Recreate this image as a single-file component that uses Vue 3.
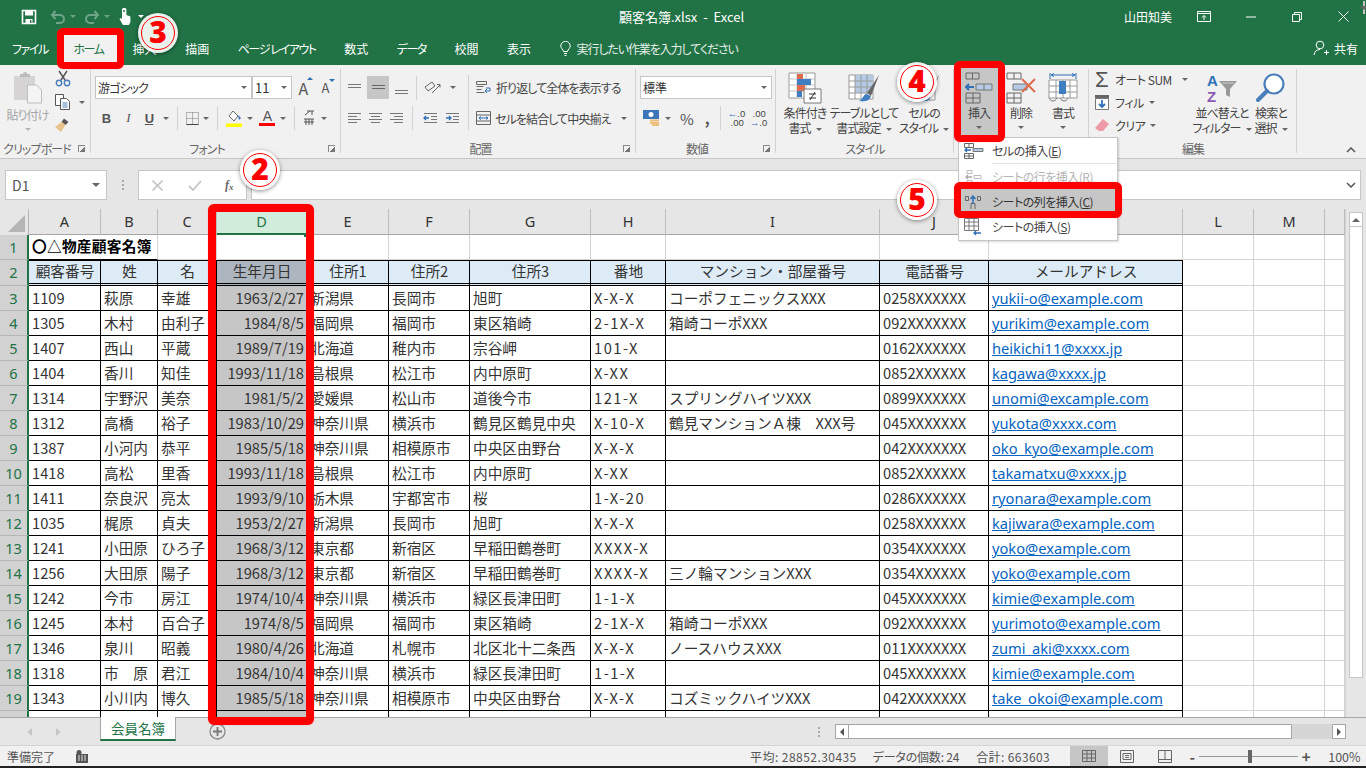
<template>
  <div class="app">
    <!-- title bar -->
    <div class="titlebar">
      <div class="qat">
        <svg class="save" width="16" height="16" viewBox="0 0 16 16"><path d="M1.5 1.5h13v13h-13z" fill="none" stroke="#fff" stroke-width="1.6"/><path d="M4 1.5h8v5H4zM4.500 10h7v4.500h-7z" fill="#fff"/><path d="M9 11h1.400v3H9z" fill="#217346"/></svg>
        <svg class="undo" width="16" height="14" viewBox="0 0 16 14"><path d="M2 5h8a4 4 0 0 1 0 8H6M5.500 1 2 5l3.500 4" fill="none" stroke="#6fa488" stroke-width="2"/></svg>
        <span class="tri dim t1"></span>
        <svg class="redo" width="16" height="14" viewBox="0 0 16 14"><path d="M14 5H6a4 4 0 0 0 0 8h4M10.500 1 14 5l-3.500 4" fill="none" stroke="#6fa488" stroke-width="2"/></svg>
        <span class="tri dim t1"></span>
        <svg class="touch" width="14" height="18" viewBox="0 0 14 18"><path d="M4 2a2.200 2.200 0 0 1 4.400 0v5l4 1.500V14l-1.500 3H5L1.500 11l1-1L4 11z" fill="#fff"/><circle cx="6" cy="3" r="1" fill="#217346"/></svg>
        <span class="tri t2"></span>
      </div>
      <div class="doc">顧客名簿.xlsx &nbsp;-&nbsp; Excel</div>
      <div class="winctl">
        <span class="user">山田知美</span>
        <svg class="wi1" width="14" height="11" viewBox="0 0 14 11"><path d="M.5.500h13v10H.500zM.5 2.500h13M7 9V4.500M5 6.500l2-2 2 2" fill="none" stroke="#fff"/></svg>
        <svg class="wi2" width="10" height="2" viewBox="0 0 10 2"><path d="M0 1h10" stroke="#fff"/></svg>
        <svg class="wi3" width="10" height="10" viewBox="0 0 10 10"><path d="M.5 2.500h7v7h-7zM2.500 2.500v-2h7v7h-2" fill="none" stroke="#fff"/></svg>
        <svg class="wi4" width="11" height="11" viewBox="0 0 11 11"><path d="M.5.500l10 10M10.500.500l-10 10" stroke="#fff"/></svg>
      </div>
    </div>

    <!-- tabs -->
    <div class="tabs">
      <span class="tab kana">ファイル</span>
      <span class="tab kana home">ホーム</span>
      <span class="tab">挿入</span>
      <span class="tab">描画</span>
      <span class="tab kana">ページ レイアウト</span>
      <span class="tab">数式</span>
      <span class="tab kana">データ</span>
      <span class="tab">校閲</span>
      <span class="tab">表示</span>
      <span class="tell">
        <svg width="11" height="15" viewBox="0 0 11 15"><path d="M3.500 10.500C3 8 .8 7.500.8 5a4.700 4.700 0 0 1 9.400 0c0 2.500-2.200 3-2.700 5.500zM4 12.500h3M4.500 14.500h2" fill="none" stroke="#fff"/></svg>
        <span class="tell-t">実行したい作業を入力してください</span>
      </span>
      <span class="share">
        <svg width="16" height="16" viewBox="0 0 16 16"><circle cx="7" cy="5" r="3.800" fill="none" stroke="#fff"/><path d="M1 15c.5-3.500 2.500-5.500 6-5.500M11 12.500h5M13.500 10v5" fill="none" stroke="#fff"/></svg>
        共有
      </span>
    </div>

    <!-- ribbon -->
    <div class="ribbon">
      <section class="group g-clip">
        <div class="body row-body">
          <div class="big paste">
            <svg width="30" height="32" viewBox="0 0 30 32"><path d="M1 4h21v24H1z" fill="#d5d3d3"/><path d="M7 5V2h3a2 2 0 0 1 4 0h3v3z" fill="#bdbbbb"/><path d="M14.500 13h9l5 5v13h-14z" fill="#f4f4f4" stroke="#bdbdbd"/></svg>
            <span class="lbl dis">貼り付け</span>
            <span class="tri lt"></span>
          </div>
          <div class="clip-col">
            <svg width="16" height="17" viewBox="0 0 16 17"><path d="M4 1l6 9M12 1L6 10" stroke="#555" stroke-width="1.500"/><circle cx="4" cy="13" r="2.700" fill="none" stroke="#4a7ebb" stroke-width="1.400"/><circle cx="12" cy="13" r="2.700" fill="none" stroke="#4a7ebb" stroke-width="1.400"/></svg>
            <div class="il">
              <svg width="16" height="16" viewBox="0 0 16 16"><path d="M.5.500h8v11h-8z" fill="#fff" stroke="#555"/><path d="M5.500 4.500h6l3 3v8h-9z" fill="#fff" stroke="#555"/><path d="M7.500 9h5M7.500 11h5M7.500 13h5" stroke="#4a7ebb"/></svg>
              <span class="tri"></span>
            </div>
            <svg width="16" height="16" viewBox="0 0 16 16"><path d="M9 1.500l4.500 3.500-3 3L6.500 5z" fill="#555"/><path d="M6.500 5l4 3L6 15 0 10z" fill="#e8c48a"/></svg>
          </div>
        </div>
        <div class="glabel lb-clip">クリップボード<i class="launch"></i></div>
      </section>

      <section class="group g-font">
        <div class="body">
          <div class="r1">
            <div class="select fontname"><span>游ゴシック</span><i class="tri"></i></div>
            <div class="select fontsize"><span>11</span><i class="tri"></i></div>
            <span class="grow">A<i class="up"></i></span>
            <span class="shrink">A<i class="dn"></i></span>
          </div>
          <div class="r2">
            <b class="fmt">B</b><i class="fmt it">I</i><u class="fmt un">U</u><span class="tri m4"></span>
            <span class="vsep"></span>
            <svg width="13" height="13" viewBox="0 0 13 13"><path d="M.5.500h12v12H.500zM6.500 .5v12M.5 6.500h12" fill="none" stroke="#777" stroke-dasharray="1 1"/><path d="M.5 12.500h12" stroke="#444"/></svg>
            <span class="tri m4"></span>
            <span class="vsep"></span>
            <svg width="16" height="17" viewBox="0 0 16 17"><path d="M7 1l5 5-4 5-5-5z" fill="#fff" stroke="#666"/><path d="M12 5l3 3-2 2z" fill="#2f6fb5"/><path d="M0 13.500h16V17H0z" fill="#ff0"/></svg>
            <span class="tri m5"></span>
            <span class="fcolor">A</span>
            <span class="tri m5"></span>
            <span class="vsep"></span>
            <svg width="12" height="16" viewBox="0 0 12 16"><path d="M4 1h7M9 1v4M2 5l5-4M1 9h10M1 12h10M3 9v6M6 9v6M9 9v6" fill="none" stroke="#555"/></svg>
            <span class="tri m6"></span>
          </div>
        </div>
        <div class="glabel lb-font">フォント<i class="launch"></i></div>
      </section>

      <section class="group g-align">
        <div class="body row-body">
          <div class="al-left">
            <div class="r1 al-r1">
              <svg width="15" height="9" viewBox="0 0 15 9"><path d="M1 1.500h13M1 4.500h13" stroke="#777"/></svg>
              <span class="al-on"><svg width="15" height="9" viewBox="0 0 15 9"><path d="M1 2.500h13M1 5.500h13" stroke="#666"/></svg></span>
              <svg class="al-b" width="15" height="9" viewBox="0 0 15 9"><path d="M1 4.500h13M1 7.500h13" stroke="#777"/></svg>
              <span class="vsep sm"></span>
              <svg width="18" height="14" viewBox="0 0 18 14"><path d="M1 6l7-5 3 4-7 5zM8 12l8-8M13 3.500h3v3" fill="none" stroke="#666"/></svg>
              <span class="tri m3"></span>
            </div>
            <div class="r2 al-r2">
              <svg width="15" height="11" viewBox="0 0 15 11"><path d="M1 .5h13M1 3.500h9M1 6.500h13M1 9.500h9" stroke="#777"/></svg>
              <svg width="15" height="11" viewBox="0 0 15 11"><path d="M1 .5h13M3 3.500h9M1 6.500h13M3 9.500h9" stroke="#777"/></svg>
              <svg width="15" height="11" viewBox="0 0 15 11"><path d="M1 .5h13M5 3.500h9M1 6.500h13M5 9.500h9" stroke="#777"/></svg>
              <span class="vsep sm"></span>
              <svg class="ind1" width="15" height="11" viewBox="0 0 15 11"><path d="M1 .5h13M8 3.500h6M8 6.500h6M1 9.500h13" stroke="#777"/><path d="M6 5H1M3 3L1 5l2 2" fill="none" stroke="#2f6fb5" stroke-width="1.300"/></svg>
              <svg class="ind2" width="15" height="11" viewBox="0 0 15 11"><path d="M1 .5h13M8 3.500h6M8 6.500h6M1 9.500h13" stroke="#777"/><path d="M1 5h5M4 3l2 2-2 2" fill="none" stroke="#2f6fb5" stroke-width="1.300"/></svg>
            </div>
          </div>
          <div class="al-right">
            <div class="wrapbtn">
              <svg width="16" height="14" viewBox="0 0 16 14"><path d="M.5.500h10v3H.500zM.5 5.500h7M.5 8.500h5M.5 11.500h8" fill="none" stroke="#666"/><path d="M10 7h4v3h-5M11 8L9 10l2 2" fill="none" stroke="#2f6fb5"/></svg>
              折り返して全体を表示する
            </div>
            <div class="wrapbtn second">
              <svg width="15" height="14" viewBox="0 0 15 14"><path d="M.5.500h14v13H.500zM.5 4h14M.5 10h14" fill="none" stroke="#666"/><path d="M3 7h9M5 5.500L3 7l2 1.500M10 5.500L12 7l-2 1.500" fill="none" stroke="#2f6fb5"/></svg>
              セルを結合して中央揃え
              <span class="tri m6"></span>
            </div>
          </div>
        </div>
        <div class="glabel lb-align">配置<i class="launch"></i></div>
      </section>

      <section class="group g-num">
        <div class="body">
          <div class="r1"><div class="select numfmt"><span>標準</span><i class="tri"></i></div></div>
          <div class="r2 num-r2">
            <svg width="17" height="16" viewBox="0 0 17 16"><path d="M0 0h16v9H0z" fill="#3a76b8"/><circle cx="8" cy="4.500" r="2.500" fill="#fff"/><path d="M7 9.500h9v2H7zM7 12h9v2H7zM9 14h7v2H9z" fill="#ecc07c"/></svg>
            <span class="tri m5"></span>
            <span class="pct">%</span>
            <span class="comma">,</span>
            <span class="vsep"></span>
            <span class="dec"><i><em>←</em>.0</i><i>.00</i></span>
            <span class="dec"><i>.00</i><i><em>→</em>.0</i></span>
          </div>
        </div>
        <div class="glabel lb-font">数値<i class="launch"></i></div>
      </section>

      <section class="group g-style">
        <div class="body row-body">
          <div class="big w58">
            <svg width="34" height="32" viewBox="0 0 34 32"><path d="M1 1h26v25H1z" fill="#fff" stroke="#999"/><path d="M9 1v25M18 1v25M1 7h26M1 13h26M1 19h26" stroke="#c4c4c4"/><path d="M9 2h6v5H9z" fill="#dd6b4d"/><path d="M9 7h14v6H9z" fill="#3f7fc1"/><path d="M9 13h8v6H9z" fill="#dd6b4d"/><path d="M9 19h5v6H9z" fill="#3f7fc1"/><path d="M16 17h17v14H16z" fill="#fff" stroke="#777"/><path d="M21 22h7M21 26h7M27 20l-5 8" stroke="#333"/></svg>
            <span class="lbl">条件付き</span>
            <span class="lbl">書式<i class="tri in"></i></span>
          </div>
          <div class="big w60">
            <svg width="32" height="32" viewBox="0 0 32 32"><path d="M1 3h24v24H1z" fill="#fff" stroke="#999"/><path d="M7 3h18v18H7z" fill="#b5cbe5"/><path d="M1 9h24M1 15h24M1 21h24M7 3v24M13 3v24M19 3v24" stroke="#9a9a9a"/><path d="M31 3L19 21l4 3z" fill="#666"/><path d="M18 22c-3 1-3 5-7 7 5 1 11 0 12-5z" fill="#3f7fc1"/></svg>
            <span class="lbl">テーブルとして</span>
            <span class="lbl">書式設定<i class="tri in"></i></span>
          </div>
          <div class="big w60">
            <svg width="32" height="32" viewBox="0 0 32 32"><path d="M3 8h24v20H3z" fill="#fff" stroke="#999"/><path d="M31 3L19 21l4 3z" fill="#666"/><path d="M18 22c-3 1-3 5-7 7 5 1 11 0 12-5z" fill="#3f7fc1"/></svg>
            <span class="lbl">セルの</span>
            <span class="lbl">スタイル<i class="tri in"></i></span>
          </div>
        </div>
        <div class="glabel">スタイル</div>
      </section>

      <section class="group g-cell">
        <div class="body row-body">
          <div class="big cellbtn active">
            <svg width="28" height="32" viewBox="0 0 28 32"><path d="M1 1h13v6H1zM7.500 1v6M1 21h14v10H1zM8 21v10M1 26h14" fill="none" stroke="#666"/><path d="M11 12h16v6H11z" fill="#b5cbe5" stroke="#777"/><path d="M19 12v6" stroke="#777"/><path d="M9 15H1M4 12l-3 3 3 3" fill="none" stroke="#2f6fb5" stroke-width="2"/></svg>
            <span class="lbl">挿入</span>
            <span class="tri lt2"></span>
          </div>
          <div class="big cellbtn">
            <svg width="30" height="32" viewBox="0 0 30 32"><path d="M1 1h14v6H1zM8 1v6M1 21h14v10H1zM8 21v10M1 26h14" fill="none" stroke="#666"/><path d="M7 12h14v6H7z" fill="#b5cbe5" stroke="#777"/><path d="M16 7l13 13M29 7L16 20" stroke="#dd6b4d" stroke-width="2"/></svg>
            <span class="lbl">削除</span>
            <span class="tri lt2"></span>
          </div>
          <div class="big cellbtn">
            <svg width="30" height="32" viewBox="0 0 30 32"><path d="M2 1v6M28 1v6M3 3h24M6 1.500L3 3l3 1.500M24 1.500L27 3l-3 1.500" fill="none" stroke="#2f6fb5"/><path d="M1 8h28v18H1zM1 14h28M1 20h28M8 8v18M15 8v18M22 8v18" fill="#fff" stroke="#999"/><path d="M11 9h7v13h-7z" fill="#3f7fc1"/><path d="M1 26c2 4 6 4 8 0M12 26c2 4 6 4 8 0" fill="none" stroke="#777"/></svg>
            <span class="lbl">書式</span>
            <span class="tri lt2"></span>
          </div>
        </div>
        <div class="glabel"></div>
      </section>

      <section class="group g-edit">
        <div class="body row-body">
          <div class="edit-col">
            <div class="edit-row"><span class="sigma">Σ</span><span>オート SUM</span><i class="tri m12"></i></div>
            <div class="edit-row">
              <svg width="14" height="15" viewBox="0 0 14 15"><path d="M0 0h14v3H0z" fill="#666"/><path d="M.5 3.500h13v11H.500z" fill="#fff" stroke="#777"/><path d="M7 5v7M4 9l3 3 3-3" fill="none" stroke="#2f6fb5" stroke-width="1.800"/></svg>
              <span class="fl">フィル</span><i class="tri m5"></i>
            </div>
            <div class="edit-row">
              <svg width="14" height="13" viewBox="0 0 14 13"><path d="M8 0l6 5-6 7H4L0 9z" fill="#ef9aa8"/></svg>
              <span class="fl">クリア</span><i class="tri m5"></i>
            </div>
          </div>
          <div class="big w54">
            <svg width="32" height="32" viewBox="0 0 32 32"><text x="1" y="14" class="az a">A</text><text x="1" y="30" class="az z">Z</text><path d="M13 9h18l-7 8v8l-4-2v-6z" fill="#999"/><path d="M16 11h12" stroke="#ccc"/></svg>
            <span class="lbl">並べ替えと</span>
            <span class="lbl">フィルター<i class="tri in"></i></span>
          </div>
          <div class="big w44">
            <svg width="30" height="32" viewBox="0 0 30 32"><circle cx="18" cy="12" r="9.500" fill="#fff" stroke="#4a7ebb" stroke-width="2.200"/><path d="M11 19L2 28" stroke="#4a7ebb" stroke-width="4" stroke-linecap="round"/></svg>
            <span class="lbl">検索と</span>
            <span class="lbl">選択<i class="tri in"></i></span>
          </div>
        </div>
        <div class="glabel">編集</div>
      </section>

      <div class="collapse">
        <svg width="10" height="6" viewBox="0 0 10 6"><path d="M1 5l4-4 4 4" fill="none" stroke="#555" stroke-width="1.500"/></svg>
      </div>
    </div>

    <!-- formula bar -->
    <div class="fbar">
      <div class="namebox"><span>D1</span><i class="tri big-tri"></i></div>
      <span class="fdots"></span>
      <div class="fbtns">
        <svg width="11" height="11" viewBox="0 0 11 11"><path d="M.5.500l10 10M10.500.500l-10 10" stroke="#c6c6c6" stroke-width="1.600"/></svg>
        <svg width="14" height="11" viewBox="0 0 14 11"><path d="M1 6l4 4 8-9" fill="none" stroke="#c6c6c6" stroke-width="1.800"/></svg>
        <span class="fx">f<sub>x</sub></span>
      </div>
      <div class="finput">
        <svg width="10" height="6" viewBox="0 0 10 6"><path d="M1 1l4 4 4-4" fill="none" stroke="#555" stroke-width="1.500"/></svg>
      </div>
    </div>

    <!-- sheet grid -->
    <div class="sheet">
      <div class="grid">
        <div class="gridrow colhead">
          <div class="corner"><i></i></div>
          <div v-for="c in letters" :key="c" class="ch" :class="{ sel: c === 'D' }">{{ c }}</div>
          <div class="ch"></div>
        </div>

        <div class="gridrow r25">
          <div class="rh">1</div>
          <div class="cell plain title2">〇△物産顧客名簿</div>
          <div class="cell plain"></div>
          <div class="cell plain d1"><i class="handle"></i></div>
          <div v-for="n in 10" :key="n" class="cell plain"></div>
        </div>

        <div class="gridrow r26">
          <div class="rh">2</div>
          <div v-for="(h, i) in heads" :key="h" class="cell hd" :class="{ hdsel: i === 3 }">{{ h }}</div>
          <div class="cell plain"></div><div class="cell plain"></div><div class="cell plain"></div>
        </div>

        <div v-for="(row, r) in rows" :key="r" class="gridrow r25">
          <div class="rh">{{ r + 3 }}</div>
          <div v-for="(v, i) in row" :key="i" class="cell data" :class="{ dt: i === 3, wide: i === 7 }">
            <a v-if="i === 10" class="link">{{ v }}</a>
            <template v-else>{{ v }}</template>
          </div>
          <div class="cell plain"></div><div class="cell plain"></div><div class="cell plain"></div>
        </div>

        <div class="gridrow r25">
          <div class="rh"></div>
          <div v-for="i in 11" :key="i" class="cell data" :class="{ dt: i === 4 }"><template v-if="i === 4">1985/5/18</template></div>
          <div class="cell plain"></div><div class="cell plain"></div><div class="cell plain"></div>
        </div>
      </div>

      <div class="vscroll">
        <div class="sbtn"><i class="tup"></i></div>
        <div class="vthumb"></div>
        <div class="sbtn dn"><i class="tdn"></i></div>
      </div>
    </div>

    <!-- sheet tabs -->
    <div class="sheettabs">
      <span class="nav nl"></span>
      <span class="nav nr"></span>
      <div class="stab">会員名簿</div>
      <svg class="addsheet" width="17" height="17" viewBox="0 0 17 17"><circle cx="8.500" cy="8.500" r="7.500" fill="none" stroke="#8a8a8a" stroke-width="1.300"/><path d="M8.500 4v9M4 8.500h9" stroke="#777" stroke-width="1.800"/></svg>
      <span class="hdots"></span>
      <div class="hscroll">
        <div class="hbtn"><i class="tl"></i></div>
        <div class="hthumb"></div>
        <div class="hbtn end"><i class="tr"></i></div>
      </div>
    </div>

    <!-- status bar -->
    <div class="status">
      <span class="ready">準備完了</span>
      <svg width="12" height="13" viewBox="0 0 12 13"><circle cx="3" cy="2.500" r="2.500" fill="#555"/><path d="M0 4h12v9H0z" fill="#555"/><path d="M2 6h2M5 6h2M8 6h2M2 8h2M5 8h2M8 8h2M2 10h2M5 10h2M8 10h2" stroke="#e6e6e6"/></svg>
      <span class="stats s1">平均: 28852.30435</span>
      <span class="stats s2">データの個数: 24</span>
      <span class="stats s3">合計: 663603</span>
      <span class="view on"><svg width="14" height="12" viewBox="0 0 14 12"><path d="M.5.500h13v11H.500zM.5 4h13M.5 8h13M5 .5v11M9.500 .5v11" fill="none" stroke="#666"/></svg></span>
      <span class="view"><svg width="14" height="13" viewBox="0 0 14 13"><path d="M.5.500h13v12H.500zM3 3.500h8v6H3zM5 5.500h4M5 7.500h4" fill="none" stroke="#666"/></svg></span>
      <span class="view"><svg width="14" height="13" viewBox="0 0 14 13"><path d="M.5.500h13v12H.500zM.5 9.500h13M7 .5v9" fill="none" stroke="#666"/></svg></span>
      <span class="zm">-</span>
      <span class="slider"><i></i></span>
      <span class="zm">+</span>
      <span class="pc">100%</span>
    </div>
    <div class="strip"></div>

    <!-- dropdown menu opened from 挿入 -->
    <div class="menu">
      <div class="mi first-mi">
        <svg width="20" height="16" viewBox="0 0 20 16"><path d="M.5.500h9v4h-9zM5 .5v4M.5 10.500h9v5h-9zM5 10.500v5M.5 13h9" fill="none" stroke="#666"/><path d="M9 5.500h10v3H9z" fill="#b5cbe5" stroke="#777"/><path d="M7 7H1M3 5L1 7l2 2" fill="none" stroke="#2f6fb5" stroke-width="1.300"/></svg>
        <span>セルの挿入(<u>E</u>)</span>
      </div>
      <div class="msep"></div>
      <div class="mi off">
        <svg width="20" height="14" viewBox="0 0 20 14"><path d="M3 .5h5v3H3zM3 10.500h5v3H3zM10 5.500h7v3h-7z" fill="none" stroke="#bbb"/><path d="M8 7H2M4 5L2 7l2 2" fill="none" stroke="#aaa" stroke-width="1.300"/></svg>
        <span>シートの行を挿入(R)</span>
      </div>
      <div class="mi hot">
        <svg width="20" height="14" viewBox="0 0 20 14"><path d="M1.500 1.500h3v4h-3zM13.500 1.500h3v4h-3zM7 8.500h4V14M7 8.500V14" fill="none" stroke="#666"/><path d="M9 9V1M6.500 4L9 1l2.500 3" fill="none" stroke="#2f6fb5" stroke-width="1.500"/></svg>
        <span>シートの列を挿入(<u>C</u>)</span>
      </div>
      <div class="mi">
        <svg width="20" height="18" viewBox="0 0 20 18"><path d="M.5.500h14v12H.500zM.5 4h14M.5 8h14M5 .5v12M10 .5v12" fill="none" stroke="#777"/><path d="M17 15h-7M12 13l-2 2 2 2" fill="none" stroke="#2f6fb5" stroke-width="1.300"/></svg>
        <span>シートの挿入(<u>S</u>)</span>
      </div>
    </div>

    <!-- red annotations -->
    <div class="mark m-home"></div>
    <div class="mark m-col"></div>
    <div class="mark m-ins"></div>
    <div class="mark m-item"></div>
    <div class="badge b3">3</div>
    <div class="badge b2">2</div>
    <div class="badge b4">4</div>
    <div class="badge b5">5</div>
  </div>
</template>

<script setup>
const letters = ['A', 'B', 'C', 'D', 'E', 'F', 'G', 'H', 'I', 'J', 'K', 'L', 'M']
const heads = ['顧客番号', '姓', '名', '生年月日', '住所1', '住所2', '住所3', '番地', 'マンション・部屋番号', '電話番号', 'メールアドレス']

const rows = [
  ['1109', '萩原', '幸雄', '1963/2/27', '新潟県', '長岡市', '旭町', 'X-X-X', 'コーポフェニックスXXX', '0258XXXXXX', 'yukii-o@example.com'],
  ['1305', '木村', '由利子', '1984/8/5', '福岡県', '福岡市', '東区箱崎', '2-1X-X', '箱崎コーポXXX', '092XXXXXXX', 'yurikim@example.com'],
  ['1407', '西山', '平蔵', '1989/7/19', '北海道', '稚内市', '宗谷岬', '101-X', '', '0162XXXXXX', 'heikichi11@xxxx.jp'],
  ['1404', '香川', '知佳', '1993/11/18', '島根県', '松江市', '内中原町', 'X-XX', '', '0852XXXXXX', 'kagawa@xxxx.jp'],
  ['1314', '宇野沢', '美奈', '1981/5/2', '愛媛県', '松山市', '道後今市', '121-X', 'スプリングハイツXXX', '0899XXXXXX', 'unomi@excample.com'],
  ['1312', '高橋', '裕子', '1983/10/29', '神奈川県', '横浜市', '鶴見区鶴見中央', 'X-10-X', '鶴見マンションＡ棟　XXX号', '045XXXXXXX', 'yukota@xxxx.com'],
  ['1387', '小河内', '恭平', '1985/5/18', '神奈川県', '相模原市', '中央区由野台', 'X-X-X', '', '042XXXXXXX', 'oko_kyo@example.com'],
  ['1418', '高松', '里香', '1993/11/18', '島根県', '松江市', '内中原町', 'X-XX', '', '0852XXXXXX', 'takamatxu@xxxx.jp'],
  ['1411', '奈良沢', '亮太', '1993/9/10', '栃木県', '宇都宮市', '桜', '1-X-20', '', '0286XXXXXX', 'ryonara@example.com'],
  ['1035', '梶原', '貞夫', '1953/2/27', '新潟県', '長岡市', '旭町', 'X-X-X', '', '0258XXXXXX', 'kajiwara@example.com'],
  ['1241', '小田原', 'ひろ子', '1968/3/12', '東京都', '新宿区', '早稲田鶴巻町', 'XXXX-X', '', '0354XXXXXX', 'yoko@example.com'],
  ['1256', '大田原', '陽子', '1968/3/12', '東京都', '新宿区', '早稲田鶴巻町', 'XXXX-X', '三ノ輪マンションXXX', '0354XXXXXX', 'yoko@example.com'],
  ['1242', '今市', '房江', '1974/10/4', '神奈川県', '横浜市', '緑区長津田町', '1-1-X', '', '045XXXXXXX', 'kimie@example.com'],
  ['1245', '本村', '百合子', '1974/8/5', '福岡県', '福岡市', '東区箱崎', '2-1X-X', '箱崎コーポXXX', '092XXXXXXX', 'yurimoto@example.com'],
  ['1346', '泉川', '昭義', '1980/4/26', '北海道', '札幌市', '北区北十二条西', 'X-X-X', 'ノースハウスXXX', '011XXXXXXX', 'zumi_aki@xxxx.com'],
  ['1318', '市　原', '君江', '1984/10/4', '神奈川県', '横浜市', '緑区長津田町', '1-1-X', '', '045XXXXXXX', 'kimie@example.com'],
  ['1343', '小川内', '博久', '1985/5/18', '神奈川県', '相模原市', '中央区由野台', 'X-X-X', 'コズミックハイツXXX', '042XXXXXXX', 'take_okoi@example.com']
]
</script>

<style>
html, body { margin: 0; background: #e6e6e6; }
</style>

<style scoped>
.app {
  position: relative;
  width: 1366px;
  height: 768px;
  overflow: hidden;
  display: flex;
  flex-direction: column;
  background: #e6e6e6;
  color: #444;
  font-family: "Noto Sans CJK JP", "Noto Sans", sans-serif;
  font-size: 12px;
}
svg { display: block; flex: none; }

/* little dropdown triangle */
.tri {
  display: inline-block;
  width: 0;
  height: 0;
  flex: none;
  border-left: 3.5px solid transparent;
  border-right: 3.5px solid transparent;
  border-top: 3.5px solid #666;
}
.tri.dim { border-top-color: #6fa488; }
.tri.m3 { margin-left: 3px; }
.tri.m4 { margin-left: 4px; }
.tri.m5 { margin-left: 5px; }
.tri.m6 { margin-left: 6px; }
.tri.m12 { margin-left: 10px; }
.tri.in { margin-left: 5px; vertical-align: middle; }

/* title bar */
.titlebar {
  height: 33px;
  flex: none;
  background: #217346;
  color: #fff;
  display: flex;
  align-items: center;
  position: relative;
}
.qat { display: flex; align-items: center; padding-left: 21px; }
.qat .tri { border-top-color: #fff; }
.qat .tri.dim { border-top-color: #6fa488; }
.undo { margin-left: 13px; }
.t1 { margin-left: 4px; }
.redo { margin-left: 8px; }
.touch { margin-left: 8px; }
.t2 { margin-left: 6px; }
.doc {
  position: absolute;
  left: 619px;
  font-size: 13px;
  white-space: nowrap;
}
.winctl { margin-left: auto; display: flex; align-items: center; padding-right: 17px; }
.user { font-size: 12px; margin-right: 25px; }
.wi2 { margin-left: 35px; }
.wi3 { margin-left: 36px; }
.wi4 { margin-left: 36px; }

/* tab strip */
.tabs {
  height: 32px;
  flex: none;
  background: #217346;
  color: #fff;
  display: flex;
  align-items: center;
  font-feature-settings: "palt";
  white-space: nowrap;
  padding-left: 12px;
  padding-bottom: 2px;
  box-sizing: border-box;
}
.tab { margin-right: 28.500px; }
.tab.kana { letter-spacing: -1.400px; }
.tab.home {
  background: #f1f1f1;
  color: #217346;
  margin-left: -13px;
  margin-right: 16px;
  padding: 5px 13px 0 10px;
  height: 30px;
  box-sizing: border-box;
  align-self: flex-end;
  margin-bottom: -2px;
}
.tell { display: flex; align-items: center; gap: 6px; color: #e4efe9; }
.tell-t { letter-spacing: -1.100px; }
.share { margin-left: auto; display: flex; align-items: center; gap: 5px; padding-right: 8px; }

/* ribbon */
.ribbon {
  height: 94px;
  flex: none;
  box-sizing: border-box;
  background: #f1f1f1;
  border-bottom: 1px solid #c6c6c6;
  display: flex;
  font-feature-settings: "palt";
  letter-spacing: -.9px;
}
.group {
  box-sizing: border-box;
  display: flex;
  flex-direction: column;
  position: relative;
}
.group::after {
  content: "";
  position: absolute;
  right: 0;
  top: 4px;
  bottom: 5px;
  width: 1px;
  background: #d2d2d2;
}
.body { height: 75px; flex: none; box-sizing: border-box; padding-top: 11px; }
.row-body { display: flex; padding-top: 0; }
.glabel {
  height: 18px;
  line-height: 18px;
  text-align: center;
  color: #666;
  position: relative;
}
.lb-clip { padding-right: 17px; }
.lb-font { padding-right: 22px; }
.lb-align { padding-right: 16px; }
.launch {
  position: absolute;
  right: 6px;
  top: 5px;
  width: 7px;
  height: 7px;
  box-sizing: border-box;
  border-left: 1px solid #888;
  border-top: 1px solid #888;
  background: linear-gradient(135deg, transparent 55%, #777 55%);
}
.g-clip { width: 91px; }
.g-font { width: 250px; padding-left: 4px; }
.g-align { width: 295px; }
.g-num { width: 140px; padding-left: 4px; }
.g-style { width: 178px; }
.g-cell { width: 135px; }
.g-edit { width: 208px; }
.collapse { flex: 1; display: flex; align-items: flex-end; justify-content: flex-end; padding: 0 10px 5px 0; }

.big {
  display: flex;
  flex-direction: column;
  align-items: center;
  padding-top: 7px;
  box-sizing: border-box;
  height: 75px;
  white-space: nowrap;
}
.big svg { height: 32px; margin-bottom: 1px; }
.lbl { line-height: 15px; height: 15px; }
.lbl.dis { color: #a6a6a6; margin-top: 2px; }
.paste { width: 55px; }
.tri.lt { border-top-color: #b5b5b5; margin-top: 6px; }
.tri.lt2 { margin-top: 6px; }
.clip-col { display: flex; flex-direction: column; gap: 7px; padding-top: 5px; }
.il { display: flex; align-items: center; gap: 8px; }
.w58 { width: 58px; }
.w60 { width: 60px; }
.w54 { width: 54px; }
.w44 { width: 44px; }
.cellbtn { width: 42px; }
.g-cell .row-body { padding-left: 4px; }
.cellbtn.active {
  width: 37px;
  margin: 3px 2.500px 0;
  height: 68px;
  padding-top: 4px;
  background: #c6c6c6;
}

.r1 { display: flex; align-items: center; height: 23px; }
.r2 { display: flex; align-items: center; height: 24px; margin-top: 7px; }
.select {
  box-sizing: border-box;
  height: 23px;
  background: #fff;
  border: 1px solid #c6c6c6;
  display: flex;
  align-items: center;
  justify-content: space-between;
  padding: 0 4px 0 2px;
  color: #333;
}
.fontname { width: 157px; }
.fontsize { width: 40px; font-size: 13px; letter-spacing: 0; }
.numfmt { width: 132px; letter-spacing: 0; }
.grow, .shrink { position: relative; font-size: 15px; width: 22px; text-align: center; color: #555; }
.grow { font-size: 16px; }
.shrink { font-size: 13px; }
.up, .dn { position: absolute; right: 1px; top: 1px; width: 0; height: 0; border-left: 3px solid transparent; border-right: 3px solid transparent; }
.up { border-bottom: 3px solid #2f6fb5; }
.dn { border-top: 3px solid #2f6fb5; }
.fmt { font-family: "Liberation Sans", sans-serif; font-size: 13px; color: #555; width: 22px; text-align: center; }
.it { font-family: "Liberation Serif", serif; }
.un { width: 20px; font-weight: 700; }
.vsep { width: 1px; height: 24px; background: #d2d2d2; margin: 0 8px; flex: none; }
.vsep.sm { margin: 0 7px; }
.fcolor {
  font-size: 14px;
  font-family: "Liberation Sans", sans-serif;
  color: #555;
  margin-left: 6px;
  line-height: 13px;
  border-bottom: 3px solid #f00;
  width: 16px;
  text-align: center;
}
.al-left { width: 128px; box-sizing: border-box; padding: 11px 0 0 6px; position: relative; }
.al-left::after { content: ""; position: absolute; right: 0; top: 10px; height: 55px; width: 1px; background: #d2d2d2; }
.al-r1 { gap: 5px; }
.al-on { width: 22px; height: 23px; background: #c6c6c6; display: flex; align-items: center; justify-content: center; }
.al-b { margin-top: 5px; }
.al-r2 { padding-left: 0; gap: 6px; }
.al-r2 .vsep.sm { margin: 0 2px; }
.al-r1 .vsep.sm { margin: 0 2px; }
.ind1 { margin-left: 2px; }
.ind2 { margin-left: 1px; }
.al-right { padding: 11px 0 0 7px; white-space: nowrap; }
.wrapbtn { display: flex; align-items: center; gap: 4px; height: 23px; }
.wrapbtn.second { margin-top: 7px; height: 24px; }
.pct { font-size: 15px; margin-left: 9px; color: #555; letter-spacing: 0; }
.comma { font-size: 15px; margin-left: 11px; font-weight: 700; color: #555; line-height: 10px; }
.num-r2 { padding-left: 3px; }
.num-r2 .vsep { margin: 0 7px 0 11px; }
.dec {
  display: flex;
  flex-direction: column;
  font-size: 9.500px;
  line-height: 9px;
  letter-spacing: 0;
  font-family: "Liberation Sans", sans-serif;
  text-align: right;
  width: 16px;
  margin-right: 6px;
  color: #444;
}
.dec i { font-style: normal; white-space: nowrap; }
.dec em { font-style: normal; color: #2f6fb5; font-weight: 700; }
.edit-col { width: 106px; padding: 3px 0 0 6px; box-sizing: border-box; }
.edit-row { height: 23px; display: flex; align-items: center; white-space: nowrap; letter-spacing: -.5px; }
.sigma { font-family: "Liberation Sans", sans-serif; font-size: 22px; width: 20px; color: #555; line-height: 20px; }
.fl { margin-left: 6px; }
.az { font: 700 15px "Liberation Sans", sans-serif; }
.az.a { fill: #2f6fb5; }
.az.z { fill: #8a5ab0; }

/* formula bar */
.fbar {
  height: 50px;
  flex: none;
  box-sizing: border-box;
  padding: 11px 5px 9px;
  display: flex;
  background: #e6e6e6;
}
.namebox, .fbtns, .finput {
  box-sizing: border-box;
  background: #fff;
  border: 1px solid #c6c6c6;
  display: flex;
  align-items: center;
}
.namebox { width: 102px; justify-content: space-between; padding: 0 6px; font-size: 14px; color: #555; }
.big-tri { border-left-width: 4px; border-right-width: 4px; border-top-width: 4px; }
.fdots { width: 2px; height: 10px; margin: 10px 14px 0 15px; border-left: 2px dotted #aaa; box-sizing: border-box; }
.fbtns { width: 109px; padding-left: 13px; gap: 25px; }
.fx { font: italic 700 12px "Liberation Serif", serif; color: #666; margin-left: -2px; }
.fx sub { font-size: 9px; vertical-align: -1px; }
.finput { flex: 1; margin-left: 4px; justify-content: flex-end; padding-right: 4px; }

/* grid */
.sheet { height: 508px; flex: none; display: flex; overflow: hidden; }
.grid { width: 1345px; flex: none; background: #fff; overflow: hidden; }
.gridrow {
  display: grid;
  grid-template-columns: 29px 72px 57px 59px 90px 82px 81px 121px 75px 214px 109px 194px 71px 71px 20px;
  background: #fff;
}
.colhead { height: 26px; background: #e6e6e6; }
.r25 { height: 25px; }
.r26 { height: 26px; }
.corner { position: relative; border-right: 1px solid #b5b5b5; background: #e6e6e6; }
.corner i {
  position: absolute;
  right: 3px;
  bottom: 3px;
  width: 0;
  height: 0;
  border-left: 17px solid transparent;
  border-bottom: 17px solid #b5b5b5;
}
.ch {
  box-sizing: border-box;
  text-align: center;
  font-size: 14.500px;
  line-height: 24px;
  color: #333;
  background: #e6e6e6;
  border-right: 1px solid #bdbdbd;
  border-bottom: 1px solid #a6a6a6;
  font-family: "Noto Sans", sans-serif;
}
.ch.sel { background: #d2ecdc; color: #217346; border-bottom: 2px solid #217346; }
.rh {
  box-sizing: border-box;
  text-align: center;
  font-size: 14.500px;
  line-height: 24px;
  color: #217346;
  background: #d2d2d2;
  border-right: 2px solid #217346;
  border-bottom: 1px solid #b5b5b5;
  font-family: "Noto Sans", sans-serif;
}
.cell {
  box-sizing: border-box;
  min-width: 0;
  overflow: hidden;
  white-space: nowrap;
  font-size: 14.670px;
  line-height: 24px;
  color: #333;
  padding: 0 2px 0 3px;
}
.plain { border-right: 1px solid #d4d4d4; border-bottom: 1px solid #d4d4d4; }
.title2 { grid-column: span 2; font-weight: 700; color: #000; border-bottom-color: #000; letter-spacing: .3px; line-height: 22px; }
.d1 { position: relative; overflow: visible; }
.handle { position: absolute; right: -2px; top: -2px; width: 4px; height: 4px; background: #217346; }
.hd {
  background: #ddebf7;
  text-align: center;
  border-right: 1px solid #000;
  border-top: 1px solid #000;
  border-bottom: 3px double #000;
  line-height: 20px;
}
.hd.hdsel { background: #adb5be; }
.data { border-right: 1px solid #000; border-bottom: 1px solid #000; }
.dt { background: #c6c6c6; text-align: right; }
.wide { letter-spacing: 1.500px; }
.link { color: #0563c1; text-decoration: underline; font-family: "Noto Sans", sans-serif; }

.vscroll {
  flex: 1;
  box-sizing: border-box;
  padding: 3px 3px 0;
  display: flex;
  flex-direction: column;
  background: #e6e6e6;
  border-left: 1px solid #d4d4d4;
}
.sbtn {
  height: 15px;
  flex: none;
  box-sizing: border-box;
  background: #fff;
  border: 1px solid #c6c6c6;
  display: flex;
  align-items: center;
  justify-content: center;
}
.sbtn.dn { height: 13px; background: #f1f1f1; margin-top: auto; }
.tup, .tdn { width: 0; height: 0; border-left: 4px solid transparent; border-right: 4px solid transparent; }
.tup { border-bottom: 4px solid #666; }
.tdn { border-top: 4px solid #666; }
.vthumb { flex: 1; background: #fff; border: 1px solid #c6c6c6; border-top: 0; max-height: 450px; }

/* sheet tabs */
.sheettabs {
  height: 28px;
  flex: none;
  box-sizing: border-box;
  display: flex;
  align-items: flex-start;
  background: #e6e6e6;
  border-top: 1px solid #a6a6a6;
  position: relative;
}
.nav { width: 0; height: 0; border-top: 4px solid transparent; border-bottom: 4px solid transparent; margin-top: 10px; }
.nl { border-right: 5px solid #c6c6c6; margin-left: 27px; }
.nr { border-left: 5px solid #c6c6c6; margin-left: 24px; }
.stab {
  width: 76px;
  height: 24px;
  margin-left: 39px;
  margin-top: -1px;
  box-sizing: border-box;
  background: #fff;
  color: #217346;
  text-align: center;
  font-size: 13.500px;
  line-height: 22px;
  border-left: 1px solid #a6a6a6;
  border-right: 1px solid #a6a6a6;
  border-bottom: 2px solid #217346;
}
.addsheet { margin: 5px 0 0 33px; }
.hdots { width: 2px; height: 10px; margin: 9px 0 0 592px; border-left: 2px dotted #aaa; box-sizing: border-box; }
.hscroll {
  margin: 6px 0 0 15px;
  width: 511px;
  height: 15px;
  display: flex;
  background: #d6d6d6;
}
.hbtn { width: 14px; flex: none; box-sizing: border-box; background: #fff; border: 1px solid #a6a6a6; display: flex; align-items: center; justify-content: center; }
.hbtn.end { margin-left: auto; }
.hthumb { width: 443px; box-sizing: border-box; background: #fff; border: 1px solid #a6a6a6; border-left: 0; }
.tl, .tr { width: 0; height: 0; border-top: 4px solid transparent; border-bottom: 4px solid transparent; }
.tl { border-right: 4px solid #555; }
.tr { border-left: 4px solid #555; }

/* status bar */
.status {
  height: 21px;
  flex: none;
  display: flex;
  align-items: center;
  background: #f1f1f1;
  color: #555;
  white-space: nowrap;
  font-feature-settings: "palt";
  border-top: 1px solid #d4d4d4;
  box-sizing: border-box;
}
.ready { margin-left: 7px; margin-right: 21px; }
.s1 { margin-left: 662px; letter-spacing: .45px; }
.s2 { margin-left: 16px; letter-spacing: -.2px; }
.s3 { margin-left: 17px; letter-spacing: .4px; }
.view { width: 38px; height: 20px; display: flex; align-items: center; justify-content: center; }
.view.on { background: #c6c6c6; margin-left: 20px; }
.zm { width: 12px; text-align: center; font-size: 15px; font-weight: 700; margin-left: 2px; }
.slider { width: 99px; height: 1px; background: #999; position: relative; margin-left: 1px; }
.slider i { position: absolute; left: 49px; top: -6px; width: 4px; height: 13px; background: #666; }
.pc { margin-left: 16px; font-size: 12.500px; }
.strip { flex: 1; background: #222; }

/* menu */
.menu {
  position: absolute;
  left: 958px;
  top: 137px;
  width: 160px;
  height: 104px;
  box-sizing: border-box;
  background: #fff;
  border: 1px solid #c6c6c6;
  box-shadow: 1px 1px 2px rgba(0, 0, 0, .15);
  font-feature-settings: "palt";
  letter-spacing: -.5px;
  color: #444;
}
.mi { height: 25px; display: flex; align-items: center; padding-left: 5px; white-space: nowrap; }
.mi svg { margin-right: 8px; }
.first-mi { height: 25px; }
.msep { height: 1px; background: #e1e1e1; margin-left: 33px; }
.mi.off { color: #b5b5b5; }
.mi.hot { background: #c6c6c6; color: #333; }

/* annotations */
.mark {
  position: absolute;
  box-sizing: border-box;
  border: 7.500px solid #f00;
  border-radius: 6px;
  box-shadow: 0 0 1px rgba(255, 80, 80, .8);
  pointer-events: none;
}
.m-home { left: 57px; top: 28px; width: 67px; height: 41px; }
.m-col { left: 208px; top: 204px; width: 106px; height: 521px; border-width: 8px; }
.m-ins { left: 954px; top: 61px; width: 51px; height: 81px; }
.m-item { left: 954px; top: 182px; width: 168px; height: 36px; }
.badge {
  position: absolute;
  width: 40px;
  height: 40px;
  box-sizing: border-box;
  border-radius: 50%;
  background: rgba(255, 255, 255, .9);
  box-shadow: 0 1px 4px rgba(0, 0, 0, .45);
  color: #f00;
  font-family: "Noto Sans", sans-serif;
  font-weight: 900;
  font-size: 30px;
  line-height: 38px;
  text-align: center;
}
.badge::before {
  content: "";
  position: absolute;
  inset: 3px;
  border: 1.500px solid #f00;
  border-radius: 50%;
}
.b3 { left: 138px; top: 13px; }
.b2 { left: 240px; top: 150px; }
.b4 { left: 897px; top: 62px; }
.b5 { left: 897px; top: 180px; }
</style>
